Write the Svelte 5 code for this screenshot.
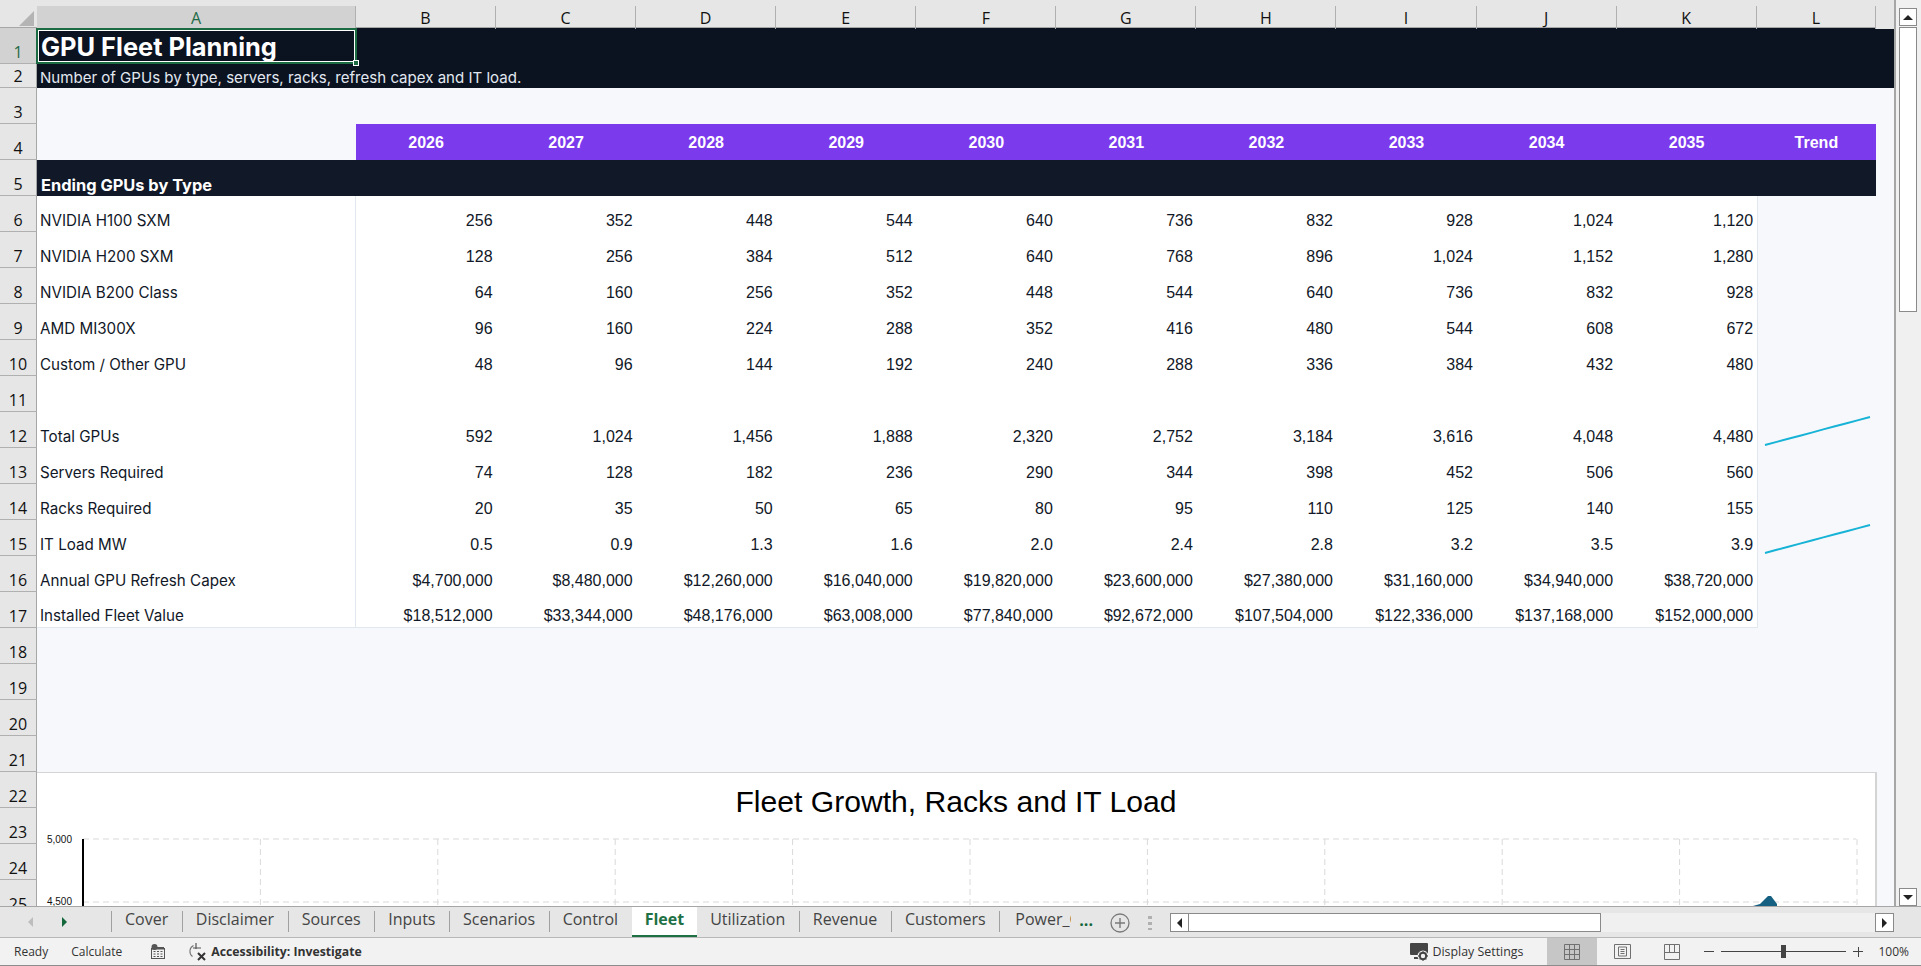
<script lang="ts">
	const columns = ['A', 'B', 'C', 'D', 'E', 'F', 'G', 'H', 'I', 'J', 'K', 'L'];
	const years = [2026, 2027, 2028, 2029, 2030, 2031, 2032, 2033, 2034, 2035];

	type Row = { n: number; kind: string; label?: string; values?: string[]; series?: number[] };

	const rows: Row[] = [
		{ n: 1, kind: 'title', label: 'GPU Fleet Planning' },
		{ n: 2, kind: 'subtitle', label: 'Number of GPUs by type, servers, racks, refresh capex and IT load.' },
		{ n: 3, kind: 'blank' },
		{ n: 4, kind: 'years' },
		{ n: 5, kind: 'section', label: 'Ending GPUs by Type' },
		{ n: 6, kind: 'data', label: 'NVIDIA H100 SXM', values: ['256', '352', '448', '544', '640', '736', '832', '928', '1,024', '1,120'] },
		{ n: 7, kind: 'data', label: 'NVIDIA H200 SXM', values: ['128', '256', '384', '512', '640', '768', '896', '1,024', '1,152', '1,280'] },
		{ n: 8, kind: 'data', label: 'NVIDIA B200 Class', values: ['64', '160', '256', '352', '448', '544', '640', '736', '832', '928'] },
		{ n: 9, kind: 'data', label: 'AMD MI300X', values: ['96', '160', '224', '288', '352', '416', '480', '544', '608', '672'] },
		{ n: 10, kind: 'data', label: 'Custom / Other GPU', values: ['48', '96', '144', '192', '240', '288', '336', '384', '432', '480'] },
		{ n: 11, kind: 'data', values: ['', '', '', '', '', '', '', '', '', ''] },
		{ n: 12, kind: 'data', label: 'Total GPUs', values: ['592', '1,024', '1,456', '1,888', '2,320', '2,752', '3,184', '3,616', '4,048', '4,480'], series: [592, 1024, 1456, 1888, 2320, 2752, 3184, 3616, 4048, 4480] },
		{ n: 13, kind: 'data', label: 'Servers Required', values: ['74', '128', '182', '236', '290', '344', '398', '452', '506', '560'] },
		{ n: 14, kind: 'data', label: 'Racks Required', values: ['20', '35', '50', '65', '80', '95', '110', '125', '140', '155'] },
		{ n: 15, kind: 'data', label: 'IT Load MW', values: ['0.5', '0.9', '1.3', '1.6', '2.0', '2.4', '2.8', '3.2', '3.5', '3.9'], series: [0.47, 0.82, 1.16, 1.51, 1.86, 2.2, 2.55, 2.89, 3.24, 3.58] },
		{ n: 16, kind: 'data', label: 'Annual GPU Refresh Capex', values: ['$4,700,000', '$8,480,000', '$12,260,000', '$16,040,000', '$19,820,000', '$23,600,000', '$27,380,000', '$31,160,000', '$34,940,000', '$38,720,000'] },
		{ n: 17, kind: 'data last', label: 'Installed Fleet Value', values: ['$18,512,000', '$33,344,000', '$48,176,000', '$63,008,000', '$77,840,000', '$92,672,000', '$107,504,000', '$122,336,000', '$137,168,000', '$152,000,000'] },
		{ n: 18, kind: 'blank' },
		{ n: 19, kind: 'blank' },
		{ n: 20, kind: 'blank' },
		{ n: 21, kind: 'blank' },
		{ n: 22, kind: 'blank' },
		{ n: 23, kind: 'blank' },
		{ n: 24, kind: 'blank' },
		{ n: 25, kind: 'blank' }
	];

	const tabs = ['Cover', 'Disclaimer', 'Sources', 'Inputs', 'Scenarios', 'Control', 'Fleet', 'Utilization', 'Revenue', 'Customers'];

	// sparkline fits a 105x28 box inside the trend cell
	function sparkPoints(series: number[]): string {
		const min = Math.min(...series);
		const max = Math.max(...series);
		return series
			.map((v, i) => `${((i * 105) / (series.length - 1)).toFixed(1)},${(29 - ((v - min) / (max - min)) * 28).toFixed(1)}`)
			.join(' ');
	}

	const gridX = Array.from({ length: 11 }, (_, i) => 46 + i * 177.4);
</script>

<div class="app">
	<div class="main">
		<div class="sheet">
			<div class="row colhead">
				<div class="corner"><span class="tri"></span></div>
				{#each columns as c}
					<div class="ch" class:sel={c === 'A'}>{c}</div>
				{/each}
				<div class="ch-rest"></div>
			</div>

			{#each rows as r}
				<div class="row {r.kind}" class:short={r.n === 2}>
					<div class="rh" class:sel={r.n === 1}>{r.n}</div>
					<div class="a" class:active={r.n === 1}>
						{r.label ?? ''}
						{#if r.n === 1}<span class="handle"></span>{/if}
					</div>
					{#if r.kind === 'years'}
						{#each years as y}
							<div class="yr">{y}</div>
						{/each}
						<div class="yr">Trend</div>
					{:else if r.values}
						{#each r.values as v}
							<div class="num">{v}</div>
						{/each}
						<div class="trend">
							{#if r.series}
								<svg class="spark" width="107" height="32" viewBox="-1 -1 107 32">
									<polyline points={sparkPoints(r.series)} fill="none" stroke="#17b3d6" stroke-width="2" />
								</svg>
							{/if}
						</div>
					{/if}
				</div>
			{/each}

			<div class="chart">
				<div class="chart-title">Fleet Growth, Racks and IT Load</div>
				<svg class="plot" width="1838" height="80" viewBox="0 0 1838 80">
					{#each gridX as x}
						<line x1={x} x2={x} y1="5" y2="80" stroke="#d9d9d9" stroke-dasharray="6 4" />
					{/each}
					<line x1="46" x2="1819" y1="5" y2="5" stroke="#d9d9d9" stroke-dasharray="6 4" />
					<line x1="46" x2="1819" y1="68" y2="68" stroke="#d9d9d9" stroke-dasharray="6 4" />
					<line x1="46" x2="46" y1="5" y2="80" stroke="#000" stroke-width="2" />
					<text x="35" y="9" text-anchor="end" class="tick">5,000</text>
					<text x="35" y="71" text-anchor="end" class="tick">4,500</text>
					<path d="M1716 72 L1723 70 L1731 62 L1734 62 L1740 70 L1740 72 Z" fill="#156082" />
				</svg>
			</div>
		</div>

		<div class="vscroll">
			<button class="sbtn" aria-label="Scroll up"><span class="arrow up"></span></button>
			<div class="vthumb"></div>
			<button class="sbtn down" aria-label="Scroll down"><span class="arrow dn"></span></button>
		</div>
	</div>

	<div class="tabbar">
		<div class="tabnav">
			<span class="arrow lf dim"></span>
			<span class="arrow rt green"></span>
		</div>
		{#each tabs as t}
			<div class="tab" class:on={t === 'Fleet'}>{t}</div>
		{/each}
		<div class="tab clip"><span>Power_C</span></div>
		<span class="more">...</span>
		<svg class="add" width="20" height="20" viewBox="0 0 20 20">
			<circle cx="10" cy="10" r="9" fill="none" stroke="#7a7a7a" stroke-width="1.3" />
			<path d="M10 5v10M5 10h10" stroke="#7a7a7a" stroke-width="1.4" />
		</svg>
		<span class="dots"></span>
		<div class="hscroll">
			<button class="hbtn" aria-label="Scroll left"><span class="arrow lf"></span></button>
			<div class="hthumb"></div>
			<button class="hbtn end" aria-label="Scroll right"><span class="arrow rt"></span></button>
		</div>
	</div>

	<div class="status">
		<span class="ready">Ready</span>
		<span class="calc">Calculate</span>
		<svg class="st-ic" width="14" height="15" viewBox="0 0 14 15">
			<circle cx="3.5" cy="3" r="3" fill="#555" />
			<rect x="0.5" y="4.5" width="13" height="10" fill="none" stroke="#555" />
			<rect x="1" y="3" width="12" height="2.5" fill="#555" />
			<path d="M2.5 7.5h2M6 7.5h2M9.5 7.5h2M2.5 10h2M6 10h2M9.5 10h2M2.5 12.5h2M6 12.5h2M9.5 12.5h2" stroke="#555" />
		</svg>
		<svg class="acc-ic" width="20" height="20" viewBox="0 0 20 20">
			<path d="M5.5 3.5a6.5 6.5 0 0 0 -1 11" fill="none" stroke="#777" stroke-width="1.1" />
			<path d="M8 1v6M5 6h8" stroke="#555" stroke-width="1.2" fill="none" />
			<path d="M10 11l7 7M17 11l-7 7" stroke="#333" stroke-width="2" />
		</svg>
		<span class="acc">Accessibility: Investigate</span>
		<span class="spacer"></span>
		<svg class="disp-ic" width="20" height="20" viewBox="0 0 20 20">
			<rect x="0" y="1" width="18" height="12" rx="1" fill="#444" />
			<rect x="4" y="15" width="6" height="2" fill="#444" />
			<circle cx="13" cy="14" r="5.5" fill="#f2f2f2" />
			<circle cx="13" cy="14" r="3.2" fill="none" stroke="#444" stroke-width="2" />
			<path d="M13 9.2v2M13 16.8v2M8.2 14h2M15.8 14h2M9.6 10.6l1.4 1.4M15 16l1.4 1.4M16.4 10.6L15 12M11 16l-1.4 1.4" stroke="#444" stroke-width="1.3" />
		</svg>
		<span class="disp">Display Settings</span>
		<div class="view on">
			<svg width="16" height="16" viewBox="0 0 16 16"><path d="M.5.5h15v15H.5zM5.5.5v15M10.5.5v15M.5 5.5h15M.5 10.5h15" fill="none" stroke="#707070" /></svg>
		</div>
		<div class="view">
			<svg width="17" height="15" viewBox="0 0 17 15"><path d="M.5.5h16v14H.5z" fill="none" stroke="#707070" /><path d="M4.5 3h8v9h-8zM6.5 5.5h4M6.5 7.5h4M6.5 9.5h4" fill="none" stroke="#707070" /></svg>
		</div>
		<div class="view">
			<svg width="16" height="16" viewBox="0 0 16 16"><path d="M.5.5h15v15H.5zM.5 8.5h15M5.5.5v8M10.5.5v8" fill="none" stroke="#707070" /></svg>
		</div>
		<div class="zoom">
			<span class="z-minus"></span>
			<div class="z-track"><span class="z-thumb"></span></div>
			<span class="z-plus"></span>
		</div>
		<span class="pct">100%</span>
	</div>
</div>

<style>
	:global(body) {
		margin: 0;
		overflow: hidden;
		background: #e6e6e6;
	}

	.app {
		width: 1921px;
		height: 966px;
		display: flex;
		flex-direction: column;
		overflow: hidden;
		font-family: 'Inter', 'Liberation Sans', sans-serif;
	}

	.main {
		height: 906px;
		display: flex;
		overflow: hidden;
	}

	.sheet {
		position: relative;
		width: 1896px;
		flex: none;
		overflow: hidden;
		background: #f7f8fc;
		border-right: 2px solid #a6a6a6;
		box-sizing: border-box;
	}

	.row {
		display: grid;
		grid-template-columns: 37px 319px repeat(10, 140.07px) 119.5px 1fr;
		height: 36px;
		color: #111827;
		font-size: 15.2px;
	}

	.row.short {
		height: 24px;
	}

	/* headers */
	.colhead {
		height: 28px;
		box-sizing: border-box;
		padding-top: 6px;
		background: #e6e6e6;
		border-bottom: 1px solid #a6a6a6;
		font-family: 'Open Sans', 'Liberation Sans', sans-serif;
		font-size: 16px;
		color: #111;
	}

	.corner {
		position: relative;
	}

	.tri {
		position: absolute;
		right: 3px;
		bottom: 3px;
		width: 0;
		height: 0;
		border-left: 15px solid transparent;
		border-bottom: 15px solid #b4b4b4;
	}

	.ch {
		display: flex;
		align-items: center;
		justify-content: center;
		padding-top: 1px;
		border-right: 1px solid #b0b0b0;
		box-sizing: border-box;
	}

	.ch.sel {
		background: #d2d2d2;
		color: #1e6b45;
	}

	.ch-rest {
		background: #e6e6e6;
	}

	.rh {
		display: flex;
		align-items: flex-end;
		justify-content: center;
		box-sizing: border-box;
		background: #e6e6e6;
		border-right: 1px solid #a6a6a6;
		border-bottom: 1px solid #b0b0b0;
		font-family: 'Open Sans', 'Liberation Sans', sans-serif;
		font-size: 16px;
		color: #111;
		line-height: 22px;
	}

	.rh.sel {
		background: #d2d2d2;
		color: #1e6b45;
	}

	.a {
		grid-column: 2;
		display: flex;
		align-items: flex-end;
		padding: 0 0 1px 3px;
		line-height: 20px;
		white-space: nowrap;
		position: relative;
		box-sizing: border-box;
	}

	/* selected cell */
	.a.active {
		border: 2px solid #1d6b42;
		box-shadow: inset 0 0 0 1px #fff;
		margin: 0 -1px 0 -1px;
		padding: 0 0 0 3px;
	}

	.handle {
		position: absolute;
		right: -4px;
		bottom: -4px;
		width: 6px;
		height: 6px;
		background: #1d6b42;
		border: 1px solid #fff;
		box-sizing: border-box;
	}

	/* banner rows */
	.title,
	.subtitle {
		background: #0b1220;
		color: #fff;
	}

	.title .a {
		font-size: 25.4px;
		font-weight: 700;
		line-height: 30px;
	}

	.subtitle .a {
		color: #e2e8f0;
		font-size: 15.05px;
		line-height: 18px;
		padding-bottom: 1px;
	}

	.yr {
		background: #7c3aed;
		color: #fff;
		font-family: 'Liberation Sans', sans-serif;
		font-weight: 700;
		font-size: 16px;
		padding-top: 1px;
		display: flex;
		align-items: center;
		justify-content: center;
	}

	.section .a {
		grid-column: 2 / span 12;
		background: #111827;
		color: #fff;
		font-size: 16.4px;
		font-weight: 700;
		padding: 0 0 1px 4px;
	}

	.data .a {
		background: #fff;
		border-right: 1px solid #e2e8f0;
	}

	.num {
		display: flex;
		align-items: flex-end;
		justify-content: flex-end;
		padding: 0 3.5px 1px 0;
		line-height: 20px;
		background: #fff;
		font-family: 'Liberation Sans', sans-serif;
		font-size: 16px;
	}

	.trend {
		position: relative;
		border-left: 1px solid #e2e8f0;
	}

	.spark {
		position: absolute;
		left: 6px;
		top: 3px;
	}

	.last .a,
	.last .num {
		border-bottom: 1px solid #e2e8f0;
	}

	/* chart floats over rows 22+ */
	.chart {
		position: absolute;
		left: 37px;
		top: 772px;
		width: 1840px;
		height: 160px;
		box-sizing: border-box;
		background: #fff;
		border-top: 1px solid #d4d4d4;
		border-right: 2px solid #d4d4d4;
	}

	.chart-title {
		height: 61px;
		padding-top: 7px;
		box-sizing: border-box;
		text-align: center;
		font-family: 'Liberation Sans', sans-serif;
		font-size: 30.1px;
		line-height: 44px;
		color: #000;
	}

	.plot {
		display: block;
	}

	.tick {
		font-family: 'Liberation Sans', sans-serif;
		font-size: 10px;
		fill: #111;
	}

	/* scrollbars */
	.vscroll {
		flex: 1;
		background: #f0f0f0;
		padding: 8px 4px 0 3px;
		display: flex;
		flex-direction: column;
	}

	button {
		padding: 0;
		margin: 0;
		background: #fff;
		border: 1px solid #8a8a8a;
		box-sizing: border-box;
		display: flex;
		align-items: center;
		justify-content: center;
	}

	.sbtn {
		width: 18px;
		height: 18px;
		flex: none;
	}

	.sbtn.down {
		margin-top: auto;
	}

	.vthumb {
		height: 285px;
		margin-top: 1px;
		background: #fff;
		border: 1px solid #8a8a8a;
		box-sizing: border-box;
	}

	.arrow {
		display: block;
		width: 0;
		height: 0;
	}

	.arrow.up {
		border: 5px solid transparent;
		border-top: 0;
		border-bottom: 5px solid #222;
	}

	.arrow.dn {
		border: 5px solid transparent;
		border-bottom: 0;
		border-top: 5px solid #222;
	}

	.arrow.lf {
		border: 5px solid transparent;
		border-left: 0;
		border-right: 5px solid #222;
	}

	.arrow.rt {
		border: 5px solid transparent;
		border-right: 0;
		border-left: 5px solid #222;
	}

	.arrow.lf.dim {
		border-right-color: #bdbdbd;
	}

	.arrow.rt.green {
		border-left-color: #14663b;
	}

	/* sheet tabs */
	.tabbar {
		height: 32px;
		flex: none;
		box-sizing: border-box;
		display: flex;
		background: #e6e6e6;
		border-top: 1px solid #a6a6a6;
		border-bottom: 1px solid #b8b8b8;
		font-family: 'Open Sans', 'Liberation Sans', sans-serif;
		font-size: 16px;
		color: #444;
	}

	.tabnav {
		width: 112px;
		flex: none;
		box-sizing: border-box;
		padding-left: 28px;
		display: flex;
		align-items: center;
		gap: 29px;
		border-right: 1px solid #a0a0a0;
		margin: 4px 0 5px;
	}

	.tab {
		padding: 0 13.6px 5px 13px;
		margin: 4px 0 5px;
		display: flex;
		align-items: center;
		border-right: 1px solid #a0a0a0;
		white-space: nowrap;
		box-sizing: border-box;
	}

	.tab.on {
		margin: 0 0 0 -1px;
		padding: 0 13px 4px;
		background: #fff;
		color: #1e7145;
		font-weight: 700;
		border-right: 0;
		border-bottom: 2px solid #1e7145;
		height: 30px;
	}

	.tab.clip {
		border-right: 0;
		width: 71px;
		padding: 0 0 5px 15px;
		overflow: hidden;
	}

	.more {
		margin-left: 8px;
		color: #14663b;
		font-weight: 700;
		line-height: 26px;
	}

	.add {
		margin: 6px 0 0 17px;
	}

	.dots {
		width: 4px;
		height: 14px;
		margin: 9px 0 0 18px;
		background: repeating-linear-gradient(#b0b0b0 0 3px, transparent 3px 6px);
	}

	.hscroll {
		width: 724px;
		height: 19px;
		margin: 6px 27px 0 auto;
		display: flex;
		background: #f0f0f0;
	}

	.hbtn {
		width: 19px;
		height: 19px;
		flex: none;
	}

	.hbtn.end {
		margin-left: auto;
	}

	.hthumb {
		width: 412px;
		background: #fff;
		border: 1px solid #8a8a8a;
		border-left: 0;
		box-sizing: border-box;
	}

	/* status bar */
	.status {
		height: 28px;
		flex: none;
		box-sizing: border-box;
		display: flex;
		align-items: center;
		background: #f2f2f2;
		border-bottom: 1px solid #8c8c8c;
		font-family: 'Open Sans', 'Liberation Sans', sans-serif;
		font-size: 12px;
		color: #333;
	}

	.ready {
		margin-left: 14px;
	}

	.calc {
		margin-left: 23px;
	}

	.st-ic {
		margin-left: 29px;
	}

	.acc-ic {
		margin-left: 23px;
	}

	.acc {
		margin-left: 3px;
		font-size: 12.25px;
		font-weight: 700;
	}

	.spacer {
		flex: 1;
	}

	.disp {
		margin: 0 24px 0 2px;
		font-size: 12.4px;
	}

	.view {
		width: 50px;
		height: 27px;
		display: flex;
		align-items: center;
		justify-content: center;
	}

	.view.on {
		background: #c6c6c6;
	}

	.zoom {
		display: flex;
		align-items: center;
		margin-left: 7px;
	}

	.z-minus {
		width: 10px;
		height: 1px;
		background: #444;
	}

	.z-track {
		position: relative;
		width: 125px;
		height: 1px;
		margin: 0 7px;
		background: #444;
	}

	.z-thumb {
		position: absolute;
		left: 60px;
		top: -6px;
		width: 5px;
		height: 13px;
		background: #444;
	}

	.z-plus {
		width: 10px;
		height: 10px;
		background: linear-gradient(#444, #444) center / 100% 1px no-repeat, linear-gradient(#444, #444) center / 1px 100% no-repeat;
	}

	.pct {
		margin: 0 12px 0 15px;
	}
</style>
